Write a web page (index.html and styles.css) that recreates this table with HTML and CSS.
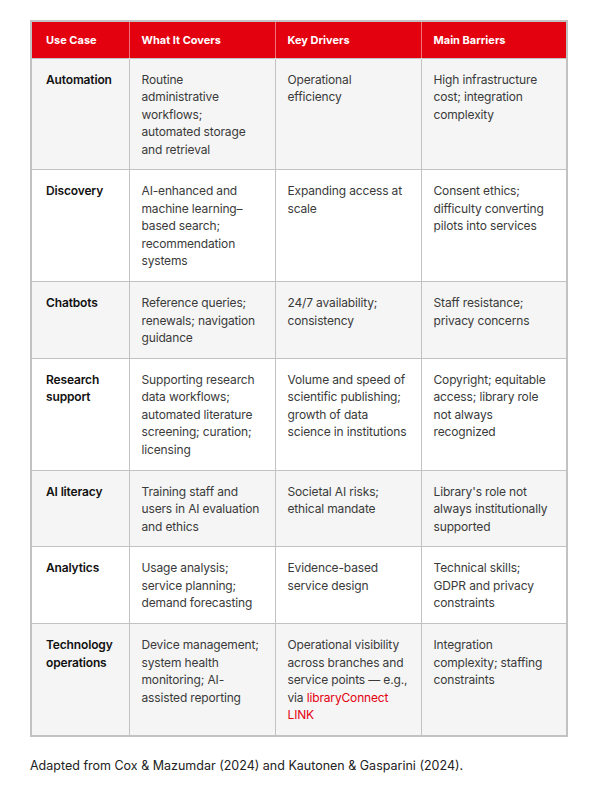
FILE: index.html
```html
<!DOCTYPE html>
<html lang="en">
<head>
<meta charset="utf-8">
<title>AI use cases in libraries</title>
<link rel="stylesheet" href="styles.css">
</head>
<body>
<main class="page">
  <table class="cases">
    <colgroup>
      <col class="c1"><col class="c2"><col class="c3"><col class="c4">
    </colgroup>
    <thead>
      <tr>
        <th>Use Case</th>
        <th>What It Covers</th>
        <th>Key Drivers</th>
        <th>Main Barriers</th>
      </tr>
    </thead>
    <tbody>
      <tr>
        <td class="name">Automation</td>
        <td>Routine<br>administrative<br>workflows;<br>automated storage<br>and retrieval</td>
        <td>Operational<br>efficiency</td>
        <td>High infrastructure<br>cost; integration<br>complexity</td>
      </tr>
      <tr>
        <td class="name">Discovery</td>
        <td>AI-enhanced and<br>machine learning–<br>based search;<br>recommendation<br>systems</td>
        <td>Expanding access at<br>scale</td>
        <td>Consent ethics;<br>difficulty converting<br>pilots into services</td>
      </tr>
      <tr>
        <td class="name">Chatbots</td>
        <td>Reference queries;<br>renewals; navigation<br>guidance</td>
        <td>24/7 availability;<br>consistency</td>
        <td>Staff resistance;<br>privacy concerns</td>
      </tr>
      <tr>
        <td class="name">Research<br>support</td>
        <td>Supporting research<br>data workflows;<br>automated literature<br>screening; curation;<br>licensing</td>
        <td>Volume and speed of<br>scientific publishing;<br>growth of data<br>science in institutions</td>
        <td>Copyright; equitable<br>access; library role<br>not always<br>recognized</td>
      </tr>
      <tr>
        <td class="name">AI literacy</td>
        <td>Training staff and<br>users in AI evaluation<br>and ethics</td>
        <td>Societal AI risks;<br>ethical mandate</td>
        <td>Library's role not<br>always institutionally<br>supported</td>
      </tr>
      <tr>
        <td class="name">Analytics</td>
        <td>Usage analysis;<br>service planning;<br>demand forecasting</td>
        <td>Evidence-based<br>service design</td>
        <td>Technical skills;<br>GDPR and privacy<br>constraints</td>
      </tr>
      <tr>
        <td class="name">Technology<br>operations</td>
        <td>Device management;<br>system health<br>monitoring; AI-<br>assisted reporting</td>
        <td>Operational visibility<br>across branches and<br>service points — e.g.,<br>via <a class="link" href="#">libraryConnect<br>LINK</a></td>
        <td>Integration<br>complexity; staffing<br>constraints</td>
      </tr>
    </tbody>
  </table>
  <p class="source">Adapted from Cox &amp; Mazumdar (2024) and Kautonen &amp; Gasparini (2024).</p>
</main>
</body>
</html>
```

FILE: styles.css
```css
html, body {
  margin: 0;
  padding: 0;
  background: #ffffff;
}

body {
  font-family: Inter, "Noto Sans", "Liberation Sans", sans-serif;
  color: #333333;
}

.page {
  padding: 20px 34px 20px 30px;
}

.cases {
  width: 536px;
  border-collapse: collapse;
  table-layout: fixed;
  border: 2px solid #c2c2c2;
  font-size: 12px;
  letter-spacing: -0.15px;
  line-height: 17.5px;
}

.c1 { width: 98px; }
.c2 { width: 146px; }
.c3 { width: 146px; }
.c4 { width: 146px; }

.cases th {
  background: #e3000f;
  color: #ffffff;
  font-size: 11px;
  font-weight: 700;
  letter-spacing: 0;
  line-height: 16px;
  text-align: left;
  padding: 10px 12px 9.5px;
  border: 0;
  border-left: 1px solid rgba(255, 255, 255, 0.45);
}

.cases th:first-child {
  border-left: 0;
  padding-left: 14px;
}

.cases td {
  vertical-align: top;
  padding: 12px 8px 11.25px 12px;
  border: 1px solid #c2c2c2;
  color: #3a3a3a;
  white-space: nowrap;
}

.cases td.name {
  padding-left: 14px;
  font-weight: 600;
  color: #111111;
}

.cases tbody tr:nth-child(odd) td {
  background: #f5f5f5;
}

.cases tbody tr:nth-child(even) td {
  background: #ffffff;
}

.link {
  color: #e3000f;
  text-decoration: none;
}

.source {
  margin: 20px 0 0 0;
  font-size: 12.5px;
  line-height: 17.5px;
  color: #222222;
}
```
